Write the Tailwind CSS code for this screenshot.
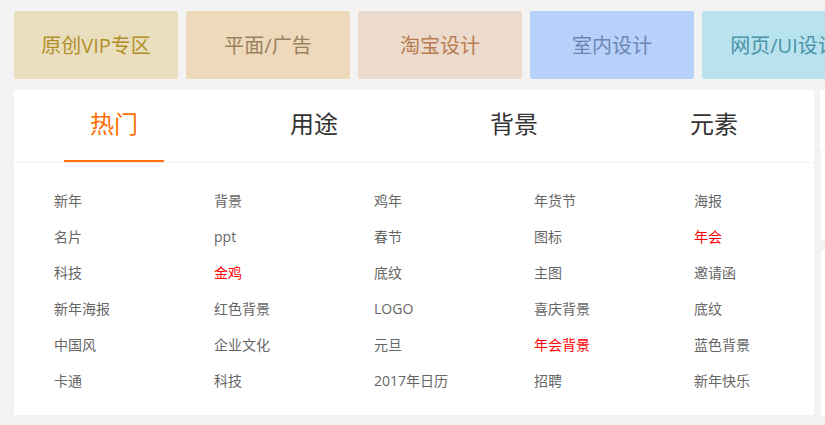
<!DOCTYPE html>
<html lang="zh-CN">
<head>
<meta charset="utf-8">
<meta name="viewport" content="width=device-width, initial-scale=1">
<title>素材分类</title>
<script src="https://cdn.jsdelivr.net/npm/@tailwindcss/browser@4"></script>
</head>
<body class="min-h-screen overflow-x-hidden bg-[#f3f3f3] pt-[11px] pl-3.5 font-['Open_Sans','Noto_Sans_CJK_SC',sans-serif] text-sm text-[#666]">
<nav class="flex gap-2 overflow-hidden text-center text-xl leading-[66px] whitespace-nowrap">
  <a href="#" class="w-41 shrink-0 rounded-xs bg-[#e9dfbe] pt-0.5 text-[#b38f29]">原创VIP专区</a>
  <a href="#" class="w-41 shrink-0 rounded-xs bg-[#eed9ba] pt-0.5 text-[#9c8161]">平面/广告</a>
  <a href="#" class="w-41 shrink-0 rounded-xs bg-[#ecdbcc] pt-0.5 text-[#b87c50]">淘宝设计</a>
  <a href="#" class="w-41 shrink-0 rounded-xs bg-[#b8d1fb] pt-0.5 text-[#6b86b5]">室内设计</a>
  <a href="#" class="w-41 shrink-0 rounded-xs bg-[#b7e2ee] pt-0.5 text-[#4b93a8]">网页/UI设计</a>
</nav>
<div class="mt-[11px] flex items-start gap-1.5">
  <main class="min-w-0 flex-1 bg-white pb-4">
    <div role="tablist" class="grid grid-cols-4 border-b border-[#f3f3f3] text-2xl text-[#333]">
      <button type="button" role="tab" aria-selected="true" class="mx-auto h-18 w-25 border-b-2 border-[#ff6f06] pb-0.5 text-[#ff6f06]">热门</button>
      <button type="button" role="tab" aria-selected="false" class="mx-auto h-18 w-25 border-b-2 border-transparent pb-0.5">用途</button>
      <button type="button" role="tab" aria-selected="false" class="mx-auto h-18 w-25 border-b-2 border-transparent pb-0.5">背景</button>
      <button type="button" role="tab" aria-selected="false" class="mx-auto h-18 w-25 border-b-2 border-transparent pb-0.5">元素</button>
    </div>
    <ul class="grid grid-cols-5 pt-5 leading-9 whitespace-nowrap">
      <li class="pl-10"><a href="#">新年</a></li>
      <li class="pl-10"><a href="#">背景</a></li>
      <li class="pl-10"><a href="#">鸡年</a></li>
      <li class="pl-10"><a href="#">年货节</a></li>
      <li class="pl-10"><a href="#">海报</a></li>
      <li class="pl-10"><a href="#">名片</a></li>
      <li class="pl-10"><a href="#">ppt</a></li>
      <li class="pl-10"><a href="#">春节</a></li>
      <li class="pl-10"><a href="#">图标</a></li>
      <li class="pl-10"><a href="#" class="text-[#f00]">年会</a></li>
      <li class="pl-10"><a href="#">科技</a></li>
      <li class="pl-10"><a href="#" class="text-[#f00]">金鸡</a></li>
      <li class="pl-10"><a href="#">底纹</a></li>
      <li class="pl-10"><a href="#">主图</a></li>
      <li class="pl-10"><a href="#">邀请函</a></li>
      <li class="pl-10"><a href="#">新年海报</a></li>
      <li class="pl-10"><a href="#">红色背景</a></li>
      <li class="pl-10"><a href="#">LOGO</a></li>
      <li class="pl-10"><a href="#">喜庆背景</a></li>
      <li class="pl-10"><a href="#">底纹</a></li>
      <li class="pl-10"><a href="#">中国风</a></li>
      <li class="pl-10"><a href="#">企业文化</a></li>
      <li class="pl-10"><a href="#">元旦</a></li>
      <li class="pl-10"><a href="#" class="text-[#f00]">年会背景</a></li>
      <li class="pl-10"><a href="#">蓝色背景</a></li>
      <li class="pl-10"><a href="#">卡通</a></li>
      <li class="pl-10"><a href="#">科技</a></li>
      <li class="pl-10"><a href="#">2017年日历</a></li>
      <li class="pl-10"><a href="#">招聘</a></li>
      <li class="pl-10"><a href="#">新年快乐</a></li>
    </ul>
  </main>
  <aside class="w-[5px] shrink-0">
    <div class="h-15 bg-white"></div>
    <div class="mt-px ml-px h-[89px] bg-white"></div>
    <div class="mt-2.5 ml-px h-[166px] bg-white"></div>
  </aside>
</div>
</body>
</html>
